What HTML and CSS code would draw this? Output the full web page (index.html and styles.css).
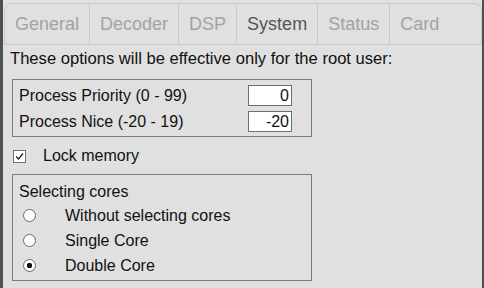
FILE: index.html
```html
<!DOCTYPE html>
<html lang="en">
<head>
    <meta charset="UTF-8">
    <link rel="stylesheet" href="styles.css">
    <title>Settings</title>
</head>
<body>
<div class="panel">
    <div class="tabs">
        <div class="tab">General</div>
        <div class="tab">Decoder</div>
        <div class="tab">DSP</div>
        <div class="tab active">System</div>
        <div class="tab">Status</div>
        <div class="tab last">Card</div>
    </div>
    <div class="content">
        <div class="note">These options will be effective only for the root user:</div>
        <div class="group prioGroup">
            <div class="row">
                <span class="rowLabel">Process Priority (0 - 99)</span>
                <input class="numInput" type="text" value="0"/>
            </div>
            <div class="row">
                <span class="rowLabel">Process Nice (-20 - 19)</span>
                <input class="numInput" type="text" value="-20"/>
            </div>
        </div>
        <label class="checkRow">
            <span class="checkBox">
                <svg width="11" height="11" viewBox="0 0 11 11"><polyline points="2,5.5 4.5,8 9,2.5" fill="none" stroke="#222" stroke-width="1.3"/></svg>
            </span>
            Lock memory
        </label>
        <div class="group coresGroup">
            <div class="groupTitle">Selecting cores</div>
            <label class="radioRow"><input class="radio" type="radio" name="cores"/>Without selecting cores</label>
            <label class="radioRow"><input class="radio" type="radio" name="cores"/>Single Core</label>
            <label class="radioRow"><input class="radio" type="radio" name="cores" checked/>Double Core</label>
        </div>
    </div>
</div>
</body>
</html>
```

FILE: styles.css
```css
body {
    margin: 0;
    background-color: #4f4f4f;
    font-family: "Liberation Sans", Arial, sans-serif;
    font-size: 16px;
    color: #111;
}

.panel {
    margin: 0 2px 0 3px;
    height: 288px;
    background-color: #e0e0e0;
    padding-top: 3px;
    box-sizing: border-box;
}

.tabs {
    display: flex;
    height: 42px;
    box-sizing: border-box;
    margin-left: 1px;
    border: 1px solid #cacaca;
    border-radius: 8px 8px 0 0;
}

.tab {
    padding: 0 10px;
    line-height: 40px;
    font-size: 18px;
    color: #a3a3a3;
    border-right: 1px solid #cacaca;
}

.tab.active {
    color: #555;
}

.tab.last {
    border-right: none;
}

.content {
    padding-left: 7px;
}

.note {
    margin-top: 4px;
    line-height: 19px;
    font-size: 16.6px;
}

.group {
    width: 300px;
    box-sizing: border-box;
    border: 1px solid #7c7c7c;
    margin-left: 2px;
}

.prioGroup {
    margin-top: 11px;
    padding: 5px 19px 4px 6px;
}

.row {
    display: flex;
    align-items: center;
    justify-content: space-between;
    height: 21px;
}

.row + .row {
    margin-top: 5px;
}

.numInput {
    width: 44px;
    height: 21px;
    box-sizing: border-box;
    border: 1px solid #6e6e6e;
    background-color: white;
    text-align: right;
    padding: 0 2px 0 0;
    font-family: "Liberation Sans", Arial, sans-serif;
    font-size: 16px;
    color: #111;
    outline: none;
}

.checkRow {
    display: flex;
    align-items: center;
    height: 18px;
    margin-top: 10px;
    margin-left: 3px;
}

.checkBox {
    width: 13px;
    height: 13px;
    box-sizing: border-box;
    border: 1px solid #707070;
    background-color: white;
    margin-right: 17px;
    display: flex;
    align-items: center;
    justify-content: center;
}

.coresGroup {
    margin-top: 9px;
    padding: 6px 6px 2px 6px;
}

.groupTitle {
    line-height: 22px;
    height: 22px;
}

.radioRow {
    display: flex;
    align-items: center;
    height: 25px;
}

.radio {
    appearance: none;
    -webkit-appearance: none;
    width: 13px;
    height: 13px;
    margin: 0 29px 0 4px;
    border: 1px solid #6a6a6a;
    border-radius: 50%;
    background-color: white;
}

.radio:checked {
    background: radial-gradient(circle, #111 0, #111 2.5px, white 3px);
}
```
